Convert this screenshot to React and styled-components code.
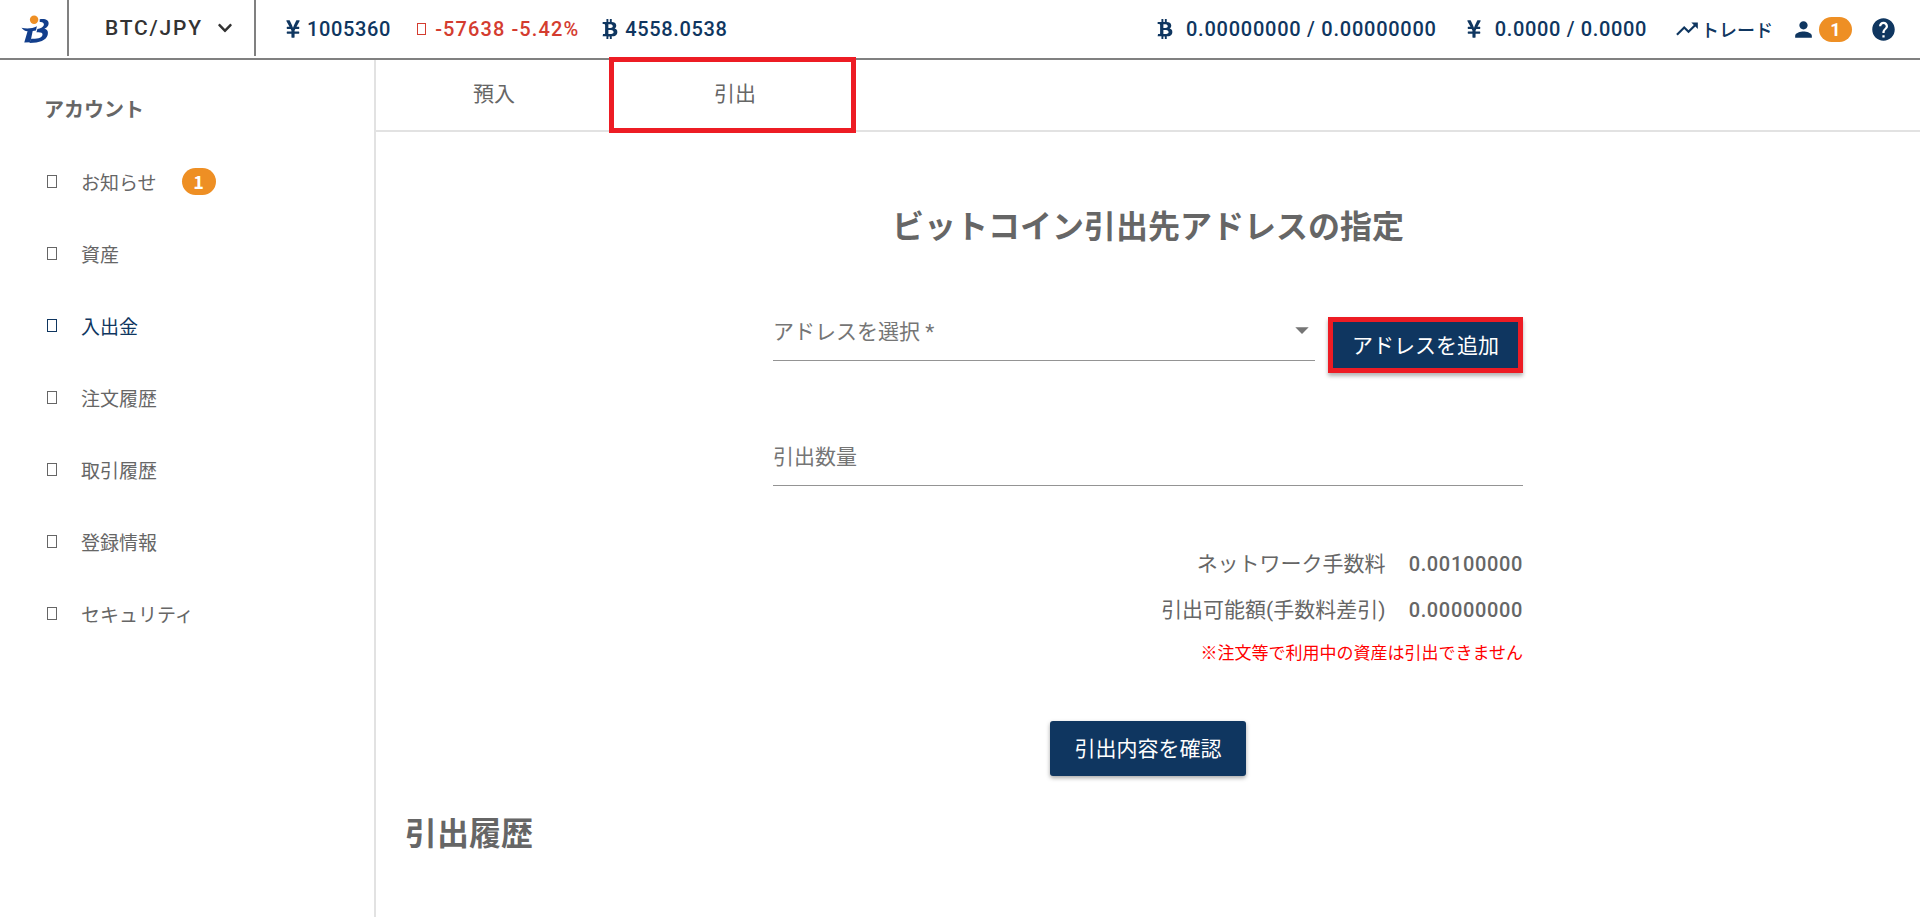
import React from 'react';
import styled, { createGlobalStyle } from 'styled-components';
import { FaBtc, FaChevronDown, FaYenSign } from 'react-icons/fa';
import { MdArrowDropDown, MdHelp, MdPerson, MdTrendingUp } from 'react-icons/md';

const NAVY = '#0f3660';
const GREY = '#666666';
const ORANGE = '#ee8f24';
const RED = '#ed1c24';

const GlobalStyle = createGlobalStyle`
  html, body {
    margin: 0;
    height: 100%;
    overflow: hidden;
    background: #fff;
    font-family: Roboto, "Noto Sans CJK JP", sans-serif;
  }
  * { box-sizing: border-box; }
`;

const Page = styled.div`
  display: flex;
  flex-direction: column;
  height: 917px;
`;

const Header = styled.header`
  display: flex;
  align-items: center;
  height: 60px;
  flex: none;
  border-bottom: 2px solid #808080;
  color: ${NAVY};
`;

const LogoCell = styled.div`
  display: flex;
  align-items: center;
  justify-content: center;
  width: 69px;
  height: 56px;
  align-self: flex-start;
  padding: 3px 0 0 4px;
  border-right: 2px solid #808080;
`;

const PairCell = styled.div`
  display: flex;
  align-items: center;
  gap: 14px;
  width: 187px;
  height: 56px;
  align-self: flex-start;
  padding-left: 36px;
  border-right: 2px solid #808080;
  color: #333;
  font-size: 21px;
  font-weight: 500;
  letter-spacing: 1.8px;
`;

const Tickers = styled.div`
  display: flex;
  align-items: center;
  flex: 1;
  gap: 26px;
  padding-left: 27px;
  font-size: 20px;
  font-weight: 500;
`;

const Stat = styled.span`
  display: inline-flex;
  align-items: center;
  gap: ${(p) => p.$gap || 6}px;
  margin-right: ${(p) => p.$trail || 0}px;
  color: ${(p) => p.$color || NAVY};
  letter-spacing: ${(p) => p.$spacing || 0.65}px;
`;

const Tofu = styled.span`
  display: inline-block;
  flex: none;
  width: ${(p) => p.$w || 10}px;
  height: ${(p) => p.$h || 13}px;
  border: 1px solid currentColor;
`;

const Account = styled.div`
  display: flex;
  align-items: center;
  padding-right: 23px;
  font-size: 20px;
  font-weight: 500;
`;

const Balance = styled(Stat)`
  margin-right: 27px;
`;

const TradeLink = styled.span`
  display: inline-flex;
  align-items: center;
  gap: 1px;
  margin-right: 18px;
  font-size: 18px;
  font-family: "Noto Sans CJK JP", sans-serif;
`;

const Badge = styled.span`
  display: inline-flex;
  align-items: center;
  justify-content: center;
  width: ${(p) => p.$w || 34}px;
  height: ${(p) => p.$h || 27}px;
  margin-left: ${(p) => p.$left || 0}px;
  border-radius: 14px;
  background: ${ORANGE};
  color: #fff;
  font-size: 18px;
  font-weight: 700;
`;

const HelpIcon = styled(MdHelp)`
  margin-left: 18px;
`;

const Body = styled.div`
  display: flex;
  flex: 1;
  min-height: 0;
`;

const Sidebar = styled.nav`
  flex: none;
  width: 376px;
  padding: 36px 0 0 44px;
  border-right: 2px solid #e2e2e2;
  font-family: "Noto Sans CJK JP", sans-serif;
`;

const SideTitle = styled.div`
  height: 49px;
  color: ${GREY};
  font-size: 20px;
  font-weight: 700;
  line-height: 26px;
`;

const SideItem = styled.div`
  display: flex;
  align-items: center;
  height: 72px;
  padding-left: 3px;
  color: ${(p) => (p.$active ? NAVY : GREY)};
  font-size: 19px;
`;

const SideLabel = styled.span`
  margin-left: 24px;
  margin-right: 25px;
`;

const Main = styled.main`
  flex: 1;
  display: flex;
  flex-direction: column;
  min-width: 0;
`;

const TabBar = styled.div`
  display: flex;
  flex: none;
  height: 72px;
  border-bottom: 2px solid #e2e2e2;
`;

const Tab = styled.div`
  position: relative;
  display: flex;
  align-items: center;
  justify-content: center;
  flex: none;
  width: ${(p) => (p.$marked ? 246 : 234)}px;
  height: 70px;
  padding: 0 0 6px ${(p) => (p.$marked ? 4 : 2)}px;
  color: ${GREY};
  font-size: 21px;

  /* the red box drawn over the screenshot, it overlaps the header line */
  ${(p) => p.$marked && `
    &::after {
      content: '';
      position: absolute;
      inset: -3px 0 -3px -1px;
      border: 5px solid ${RED};
    }
  `}
`;

const Content = styled.div`
  flex: 1;
  padding: 73px 29px 0;
`;

const Title = styled.h2`
  margin: 0;
  color: ${GREY};
  font-size: 32px;
  font-weight: 700;
  line-height: 44px;
  text-align: center;
`;

const Form = styled.div`
  width: 750px;
  margin: 56px auto 0;
`;

const SelectRow = styled.div`
  display: flex;
  align-items: flex-start;
  gap: 13px;
`;

const Field = styled.div`
  display: flex;
  align-items: center;
  justify-content: space-between;
  flex: 1;
  height: 56px;
  margin-top: ${(p) => p.$top || 0}px;
  padding-bottom: 5px;
  border-bottom: 1px solid #949494;
  color: #757575;
  font-size: 21px;
`;

const SelectArrow = styled(MdArrowDropDown)`
  margin-right: -3px;
`;

const AddButton = styled.button`
  flex: none;
  width: 195px;
  height: 56px;
  margin-top: 12px;
  padding: 0 0 3px;
  border: 5px solid ${RED};
  background: ${NAVY};
  color: #fff;
  font: inherit;
  font-size: 21px;
  box-shadow: 0 3px 4px rgba(0, 0, 0, 0.3);
`;

const Summary = styled.div`
  display: grid;
  grid-template-columns: 1fr auto;
  column-gap: 23px;
  margin-top: 55px;
  color: ${GREY};
  font-size: 21px;
  line-height: 46px;
  text-align: right;
`;

const Amount = styled.span`
  font-size: 20px;
  font-weight: 500;
  letter-spacing: 0.65px;
`;

const Note = styled.div`
  margin-top: 8px;
  color: #ff0000;
  font-size: 17px;
  line-height: 24px;
  text-align: right;
`;

const SubmitRow = styled.div`
  display: flex;
  justify-content: center;
  margin-top: 56px;
`;

const SubmitButton = styled.button`
  width: 196px;
  height: 55px;
  padding: 0 0 3px;
  border: none;
  border-radius: 3px;
  background: ${NAVY};
  color: #fff;
  font: inherit;
  font-size: 21px;
  box-shadow: 0 2px 4px rgba(0, 0, 0, 0.35);
`;

const HistoryTitle = styled.h3`
  margin: 36px 0 0;
  color: ${GREY};
  font-size: 32px;
  font-weight: 700;
  line-height: 44px;
`;

const Logo = () => (
  <svg width="29" height="29" viewBox="0 0 31 30">
    <circle cx="14" cy="4.5" r="4.5" fill="#ee8f24" />
    <path
      d="M0.5 13 C6 14.5 12 14 17 11.5 L16 16 L12.5 16.5 L10 28.5 L3.5 29 L7 17 C4.5 16.5 2 15 0.5 13 Z"
      fill="#123e8c"
    />
    <path
      d="M20 4 C26 3 30 5 29.5 9 C29.2 11.5 27.5 13 25 14 C28 15 29.5 17 28.5 21 C27 26.5 20 29.5 9 29.5 L11 25 C16 25 22.5 24.5 23 20.5 C23.3 18 20 17.5 16.5 18 L17.5 14.5 C21 14 24.5 12.5 24.5 9.5 C24.5 7.5 22.5 6.5 20 7 Z"
      fill="#123e8c"
    />
  </svg>
);

const menu = [
  { label: 'お知らせ', badge: '1' },
  { label: '資産' },
  { label: '入出金', active: true },
  { label: '注文履歴' },
  { label: '取引履歴' },
  { label: '登録情報' },
  { label: 'セキュリティ' },
];

const App = () => (
  <Page>
    <GlobalStyle />
    <Header>
      <LogoCell>
        <Logo />
      </LogoCell>
      <PairCell>
        BTC/JPY
        <FaChevronDown size={16} color="#333" />
      </PairCell>
      <Tickers>
        <Stat $gap={4}>
          <FaYenSign size={20} />
          1005360
        </Stat>
        <Stat $color="#d43c2f" $gap={9} $spacing={1.1} $trail={-5}>
          <Tofu $w={9} $h={12} />
          -57638 -5.42%
        </Stat>
        <Stat $gap={5}>
          <FaBtc size={20} />
          4558.0538
        </Stat>
      </Tickers>
      <Account>
        <Balance $gap={11} $spacing={0.75}>
          <FaBtc size={20} />
          0.00000000 / 0.00000000
        </Balance>
        <Balance $gap={11}>
          <FaYenSign size={20} />
          0.0000 / 0.0000
        </Balance>
        <TradeLink>
          <MdTrendingUp size={26} />
          トレード
        </TradeLink>
        <MdPerson size={25} />
        <Badge $w={33} $h={25} $left={3}>1</Badge>
        <HelpIcon size={27} />
      </Account>
    </Header>
    <Body>
      <Sidebar>
        <SideTitle>アカウント</SideTitle>
        {menu.map((item) => (
          <SideItem key={item.label} $active={item.active}>
            <Tofu />
            <SideLabel>{item.label}</SideLabel>
            {item.badge && <Badge>{item.badge}</Badge>}
          </SideItem>
        ))}
      </Sidebar>
      <Main>
        <TabBar>
          <Tab>預入</Tab>
          <Tab $marked>引出</Tab>
        </TabBar>
        <Content>
          <Title>ビットコイン引出先アドレスの指定</Title>
          <Form>
            <SelectRow>
              <Field>
                アドレスを選択 *
                <SelectArrow size={32} />
              </Field>
              <AddButton>アドレスを追加</AddButton>
            </SelectRow>
            <Field $top={57}>引出数量</Field>
            <Summary>
              <span>ネットワーク手数料</span>
              <Amount>0.00100000</Amount>
              <span>引出可能額(手数料差引)</span>
              <Amount>0.00000000</Amount>
            </Summary>
            <Note>※注文等で利用中の資産は引出できません</Note>
            <SubmitRow>
              <SubmitButton>引出内容を確認</SubmitButton>
            </SubmitRow>
          </Form>
          <HistoryTitle>引出履歴</HistoryTitle>
        </Content>
      </Main>
    </Body>
  </Page>
);

export default App;
